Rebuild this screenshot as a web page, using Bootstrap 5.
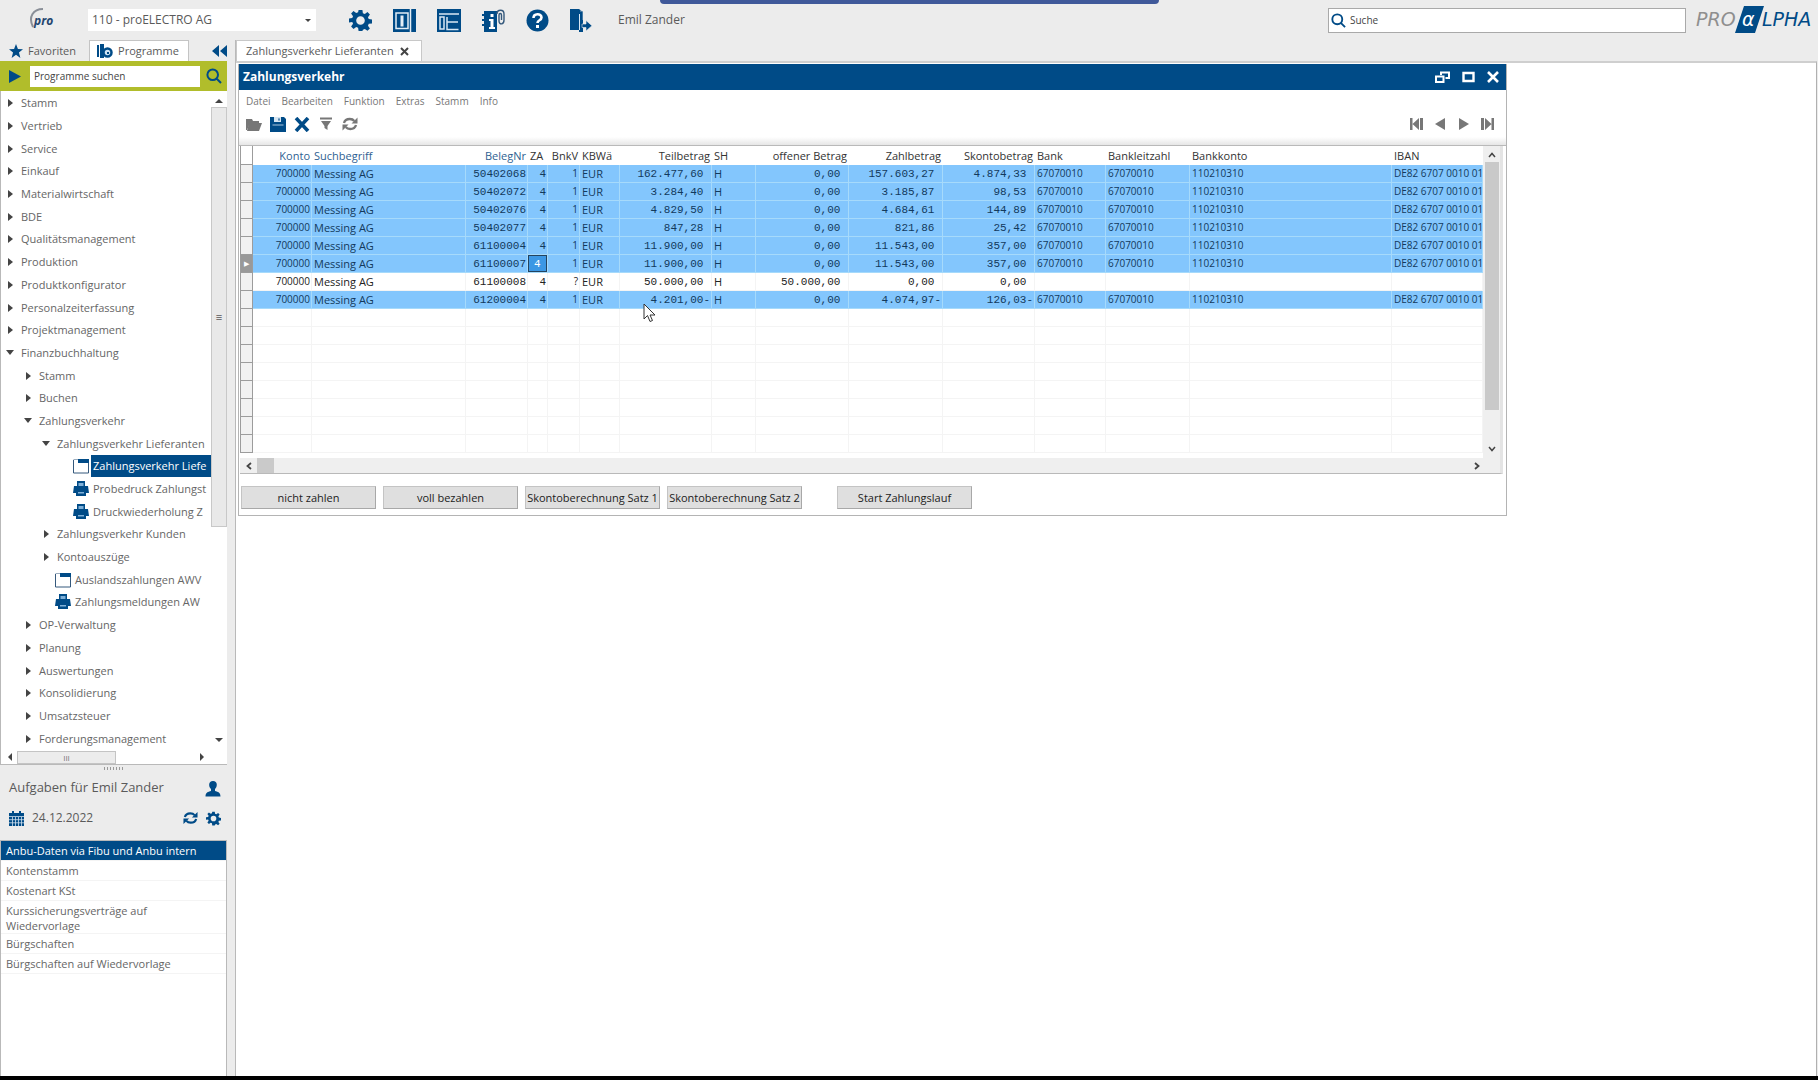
<!DOCTYPE html>
<html lang="de">
<head>
<meta charset="utf-8">
<meta name="viewport" content="width=device-width, initial-scale=1">
<title>Zahlungsverkehr Lieferanten</title>
<link href="https://cdn.jsdelivr.net/npm/bootstrap@5.3.0/dist/css/bootstrap.min.css" rel="stylesheet">
<style>
:root{--navy:#004b87;--chrome:#ececec;--ink:#5a5a5a;--edge:#b9b9b9}
body{font-family:"Open Sans","Noto Sans",sans-serif;font-size:11px;line-height:16px;color:var(--ink);background:var(--chrome);height:100vh;overflow:hidden}
button{border:0;background:none;padding:0;color:inherit}
a{color:inherit;text-decoration:none}
svg{display:block;flex:none}
.ico{color:var(--navy);fill:currentColor}
.fill-area{min-width:0;min-height:0}
/* top bar */
.topbar{height:40px;padding-left:29px}
.pro-logo{width:59px}
.mandant{width:228px;height:22px;border:0;border-radius:0;background-color:#fff;font-size:12px;color:var(--ink);padding:0 4px;appearance:none}
.mandant-wrap{position:relative}
.mandant-wrap::after{content:"";position:absolute;right:5px;top:10px;border:3px solid transparent;border-top-color:#444}
.toolset{gap:21px;margin-left:33px}
.user-name{font-size:12px;margin-left:26px}
.notch{position:absolute;top:0;left:660px;width:499px;height:4px;background:#40599a;border-radius:0 0 4px 4px}
.searchbox{width:358px;height:25px;background:#fff;border:1px solid #a9a9a9;margin-right:9px;padding-left:2px}
.searchbox input,.progsearch input{border:0;outline:0;background:#fff;color:#333;min-width:0;padding:0 4px;font-size:10px}
input::placeholder{color:#444;opacity:1}
.brand-type{font-family:"DejaVu Sans",sans-serif;font-style:italic;font-size:19px}
/* sidebar */
.side{width:236px;padding-right:8px;border-right:1px solid var(--edge)}
.side-tabs{height:21px}
.side-tab{height:21px;gap:5px;padding:0 9px}
.side-tab.on{background:#fff;border:1px solid #c4c4c4;border-bottom:0;width:100px;padding:0 7px;margin-left:4px}
.progsearch{background:#b1bd2b;height:30px;padding:0 5px 0 9px}
.progsearch input{width:170px;height:21px;margin-left:9px;margin-right:6px}
.tree-area{border-left:1px solid var(--edge);min-height:0}
.tree{margin:0;padding:1px 0 0;list-style:none;min-width:0}
.tree li{flex:1 1 0;min-height:0;white-space:nowrap}
.tree li>a,.tree li>button{display:flex;align-items:center;height:100%;color:#666}
.lv0{padding-left:7px}.lv1{padding-left:25px}.lv2{padding-left:43px}.lv3{padding-left:61px}
.twist{width:13px;display:block}
.twist::before{content:"";display:block;width:0;border:4px solid transparent;border-left:5px solid #444;border-right:0}
.twist.open::before{border:4px solid transparent;border-top:5px solid #444;border-bottom:0;margin-left:-2px}
.leaf{padding-left:11px}
.leaf-name{margin-left:2px;padding:2px 0 3px 2px;line-height:17px}
.leaf-name.on{background:var(--navy);color:#fff;width:120px}
.vbar{width:16px}
.vthumb{background:#e9e9e9;border:1px solid #c8c8c8;height:420px;width:16px}
.hbar{height:15px;background:#fff;border-left:1px solid var(--edge);border-bottom:1px solid var(--edge);padding:0 23px 0 7px}
.hthumb{width:99px;height:13px;background:#ececec;border:1px solid #c4c4c4;margin-left:5px;color:#777;font-size:8px;line-height:11px}
.tri-u,.tri-d,.tri-l,.tri-r{width:0;height:0;border:4px solid transparent}
.tri-u{border-bottom-color:#444;border-top:0}.tri-d{border-top-color:#444;border-bottom:0}
.tri-l{border-right-color:#444;border-left:0}.tri-r{border-left-color:#444;border-right:0}
.grip{height:8px;width:20px;padding-top:2px}
.grip::before{content:"";display:block;height:3px;background:repeating-linear-gradient(90deg,#999 0 1px,transparent 1px 3px)}
.tasks{height:303px}
.tasks-head{height:67px;padding:0 6px 0 9px}
.tasks-title{font-size:13px}
.tasks-date{font-size:12px}
.date-row{margin-top:13px}
.tasklist{border:1px solid var(--edge);border-bottom:0;border-radius:0;background:#fff}
.tasklist .list-group-item{border:0;border-bottom:1px solid #f4f4f4;padding:2px 4px 2px 5px;line-height:15px;color:#666;background:none;border-radius:0;width:100%}
.tasklist .list-group-item.active{background:var(--navy);color:#fff}
.tasklist .wrap-item{padding-bottom:0}
.wrap-item>span{display:block;width:150px}
/* workspace */
.doc-tabs{height:21px}
.doc-tab{height:21px;background:#fff;border:1px solid #c8c8c8;border-bottom:0;padding:0 12px 0 9px;width:186px}
.canvas{background:#fff;border-top:2px solid #cfcfcf;border-right:1px solid #b0b0b0;margin-right:1px;padding-top:1px;padding-left:2px;min-height:0}
.mdi{width:1269px;max-width:100%;border:1px solid #b4b4b4;border-top:0;background:#fff}
.mdi-title{height:26px;background:var(--navy);color:#fff;font-weight:700;font-size:12px;padding:0 7px 0 4px}
.win-ctl{gap:12px}
.menubar{gap:11px;padding:1px 7px 0;height:21px;font-size:10px}
.menubar button{color:#777;line-height:18px}
.toolrow{height:26px;padding:0 12px 0 7px}
.toolrow .tools{gap:8px}
.toolrow .tools,.toolrow .nav-icons{color:#777}
.nav-icons{gap:10px}
.shade{height:9px;background:linear-gradient(#fff,#e6e6e6);border-bottom:1px solid var(--edge)}
.gridbox{margin:0 3px 0 1px;border-right:3px solid #e4e4e4;border-bottom:1px solid var(--edge)}
.table-pane{flex:1 1 0;min-width:0;overflow:hidden;padding-bottom:5px}
.data{table-layout:fixed;margin:0;border-collapse:separate;border-spacing:0;width:100%;color:#222}
.data th,.data td{height:18px;padding:0 1px 0 2px;border:0 solid #f4f4f4;border-width:0 1px 1px 0;line-height:17px;white-space:nowrap;overflow:hidden;font-weight:400;box-shadow:none;background:#fff;color:inherit}
.data thead th{height:19px;border-color:#fff;color:#333}
.data thead th.key{color:#2f5f92}
.data .num{text-align:right}
.data td.mono{font-family:"Liberation Mono",monospace;text-align:right;padding-top:2px;line-height:15px}
.data td.digits{font-size:10px}
.data tr.paid td{background:#83c6fd;border-color:#a6dafb;color:#12395c}
.data tr>.mark-cell{background:#f1f1f1!important;border-color:#9c9c9c!important;border-left:1px solid #c8c8c8;padding:0}
.data thead tr>.mark-cell{background:#fff!important}
.data tr.current>.mark-cell{background:#999!important;color:#fff!important;font-size:7px;text-align:center}
.data tr.current>.mark-cell::before{content:"▶"}
.data td.edit{padding:0}
.data td.edit input{display:block;width:100%;height:17px;border:1px solid #23435f;background:#3c97e4;color:#fff;font:11px/15px "Liberation Mono",monospace;padding:0 5px;text-align:left}
.gv{width:17px;background:#efefef;padding:6px 0}
.gv-thumb{background:#c9c9c9;width:14px;margin-bottom:36px}
.gh{height:15px;background:#efefef;padding:0 20px 0 6px}
.gh-thumb{width:17px;height:15px;background:#cacaca;margin-left:5px}
.actions{gap:7px;padding:12px 2px 6px 2px}
.actions .btn{width:135px;height:23px;padding:0;border:1px solid #c4c4c4;border-right-color:#a8a8a8;border-bottom-color:#a8a8a8;border-radius:0;background:#dfdfdf;color:#222;font-size:11px;line-height:20px;white-space:nowrap}
.pointer{position:absolute;left:643px;top:303px}
.footline{height:4px;background:#000}
</style>
</head>
<body class="d-flex flex-column position-relative">
<svg width="0" height="0" class="position-absolute">
  <symbol id="gear" viewBox="0 0 24 24"><path fill-rule="evenodd" d="M10 1h4l.5 3.400 2 .8 2.800-2 2.500 2.500-2 2.800.8 2 3.400.5v4l-3.400.5-.8 2 2 2.800-2.500 2.500-2.800-2-2 .8L14 23h-4l-.5-3.400-2-.8-2.800 2-2.500-2.500 2-2.800-.8-2L0 14v-4l3.400-.5.8-2-2-2.800L4.700 2.200l2.800 2 2-.8zM12 7.500a4.500 4.500 0 1 0 0 9 4.500 4.500 0 0 0 0-9z"/></symbol>
  <symbol id="lens" viewBox="0 0 16 16"><path d="M11 11l4 4M12 6.700a5.300 5.300 0 1 1-10.600 0 5.300 5.300 0 0 1 10.600 0z" fill="none" stroke="currentColor" stroke-width="2"/></symbol>
  <symbol id="sync" viewBox="0 0 16 14"><path d="M2 6c.6-2.400 3-4 5.800-4 2 0 3.500.7 4.500 2M14 8c-.6 2.400-3 4-5.800 4-2 0-3.500-.7-4.500-2" fill="none" stroke="currentColor" stroke-width="2.300"/><path d="M15.500.5V6.500H9.500zM.5 13.500v-6h6z"/></symbol>
  <symbol id="winicon" viewBox="0 0 16 16"><path d="M.5 2h15v13H.5z" fill="#fff" stroke="#35597c"/><path d="M5 1h11v4H5z"/><path d="M1 2h4v3H1z" fill="#fff"/></symbol>
  <symbol id="printer" viewBox="0 0 16 16"><path d="M4 0h8v5H4zM1 5h14l1 7h-3v3H3v-3H0z"/><path d="M5.500 2h5v3h-5zM5 11h6v1.500H5z" fill="#7fb0d8"/></symbol>
</svg>

<header class="topbar d-flex align-items-center flex-shrink-0">
  <div class="pro-logo"><svg width="30" height="26" viewBox="0 0 30 26"><path d="M4 20C-1 10 4 2 14 2" fill="none" stroke="#8a8f98" stroke-width="2"/><text x="5" y="18" font-size="12" font-weight="700" font-style="italic" fill="#24456f">pro</text></svg></div>
  <div class="mandant-wrap"><select class="mandant" aria-label="Mandant"><option>110 - proELECTRO AG</option></select></div>
  <div class="toolset d-flex align-items-center">
    <button aria-label="Einstellungen"><svg class="ico" width="23" height="23"><use href="#gear"/></svg></button>
    <button aria-label="Spalten"><svg class="ico" width="23" height="23" viewBox="0 0 23 23"><path d="M0 0h23v23H0z"/><path d="M3 4h12v15.500H3zM17.500 0v23" fill="none" stroke="#e4eef6" stroke-width="1.500"/><path d="M7.500 6.500h3v11h-3z" fill="#e4eef6"/></svg></button>
    <button aria-label="Layout"><svg class="ico" width="24" height="23" viewBox="0 0 24 23"><path d="M0 0h24v23H0z"/><path d="M2 5h20M3 8v12h4V8zM10 8v12.500h11.500M10 13h11" fill="none" stroke="#d8e7f3" stroke-width="1.500"/></svg></button>
    <button aria-label="Informationen"><svg class="ico" width="23" height="23" viewBox="0 0 23 23"><path d="M2 2h13v21H2z"/><path d="M0 5h3v2H0zM0 10h3v2H0zM0 15h3v2H0z"/><path d="M8.500 5h3v3h-3zM7 10h4.500v8H13v2H7v-2h1.500v-6H7z" fill="#fff"/><path d="M15 5c0-5 7-5 7 0v6c0 5-5 5-5 1V6c0-2 2.500-2 2.500 0v5" fill="#ececec" stroke="#35597c" stroke-width="1.400"/></svg></button>
    <button aria-label="Hilfe"><svg class="ico" width="23" height="23" viewBox="0 0 23 23"><circle cx="11.500" cy="11.500" r="11"/><path d="M7.500 9c0-5 8-5 8-.5 0 3-4 2.500-4 5.500" fill="none" stroke="#fff" stroke-width="2.600"/><path d="M10 16h3v3h-3z" fill="#fff"/></svg></button>
    <button aria-label="Abmelden"><svg class="ico" width="22" height="23" viewBox="0 0 22 23"><path d="M0 0h9l4 3v20H9v-2H0z"/><path d="M9.500 5v16" stroke="#d8e7f3"/><path d="M10 2h3v9M12 15h4v-3.500l6 5.200-6 5.300v-3.500h-4z" stroke="#ececec" stroke-width=".6"/></svg></button>
  </div>
  <span class="user-name">Emil Zander</span>
  <label class="searchbox d-flex align-items-center ms-auto"><svg class="ico" width="15" height="15"><use href="#lens"/></svg><input class="flex-grow-1" type="search" placeholder="Suche" aria-label="Suche"></label>
  <svg class="brand-type" width="123" height="30" viewBox="0 0 123 30"><path d="M49 1h20l-9 27H40z" fill="#004b87"/><text x="1" y="21" fill="#8f8f8f">PRO</text><text x="67" y="21" fill="#004b87">LPHA</text><text x="47" y="21" fill="#fff">α</text></svg>
</header>
<div class="notch"></div>

<div class="d-flex flex-grow-1 fill-area">
  <aside class="side d-flex flex-column flex-shrink-0">
    <div class="side-tabs d-flex align-items-center flex-shrink-0">
      <button class="side-tab d-flex align-items-center"><svg class="ico" width="14" height="14" viewBox="0 0 16 16"><path d="M8 0l2.200 5.600 5.800.3-4.600 3.700L13 16l-5-3.600L3 16l1.600-6.400L0 5.900l5.800-.3z"/></svg>Favoriten</button>
      <button class="side-tab on d-flex align-items-center"><svg class="ico" width="16" height="14" viewBox="0 0 16 14"><path d="M0 1h2v12H0zM3 0h4v14H3z"/><circle cx="10.500" cy="8.500" r="4" fill="#cfe3f3" stroke="#004b87" stroke-width="2.500"/><path d="M10 8h2v2h-2z"/></svg>Programme</button>
      <button class="ms-auto" aria-label="Einklappen"><svg class="ico" width="15" height="12" viewBox="0 0 15 12"><path d="M7 0v12L0 6zM15 0v12L8 6z"/></svg></button>
    </div>
    <div class="progsearch d-flex align-items-center flex-shrink-0">
      <button aria-label="Start"><svg class="ico" width="12" height="13" viewBox="0 0 12 13"><path d="M0 0l12 6.500L0 13z"/></svg></button>
      <input type="search" placeholder="Programme suchen" aria-label="Programme suchen">
      <button aria-label="Suchen"><svg class="ico" width="16" height="16"><use href="#lens"/></svg></button>
    </div>
    <div class="tree-area d-flex flex-grow-1 bg-white">
      <ul class="tree d-flex flex-column flex-grow-1 overflow-hidden" id="tree"></ul>
      <div class="vbar d-flex flex-column align-items-center py-2">
        <div class="tri-u mb-1"></div>
        <div class="vthumb d-flex align-items-center justify-content-center">≡</div>
        <div class="tri-d mt-auto"></div>
      </div>
    </div>
    <div class="hbar d-flex align-items-center flex-shrink-0"><div class="tri-l"></div><div class="hthumb text-center">III</div><div class="tri-r ms-auto"></div></div>
    <div class="grip mx-auto flex-shrink-0"></div>
    <section class="tasks d-flex flex-column flex-shrink-0">
      <div class="tasks-head d-flex flex-column">
        <div class="d-flex align-items-center justify-content-between"><span class="tasks-title pt-1">Aufgaben für Emil Zander</span><svg class="ico mt-2" width="16" height="16" viewBox="0 0 16 16"><path d="M8 0c5 0 4.500 6 2 8v2c3 .8 5.500 1.500 5.500 5.500H.5c0-4 2.500-4.700 5.500-5.500V8C3.500 6 3 0 8 0z"/></svg></div>
        <div class="date-row d-flex align-items-center gap-2">
          <svg class="ico" width="15" height="15" viewBox="0 0 15 15"><path d="M0 2h15v13H0zM3 0h2v2H3zM10 0h2v2h-2z"/><path d="M0 5.500h15M0 8.700h15M0 11.800h15M3.500 6v9M6.500 6v9M9.500 6v9M12.500 6v9" stroke="#cfe0ee" stroke-width=".8"/></svg>
          <span class="tasks-date">24.12.2022</span>
          <button class="ms-auto" aria-label="Aktualisieren"><svg class="ico" width="15" height="14"><use href="#sync"/></svg></button>
          <button aria-label="Einstellungen"><svg class="ico" width="15" height="15"><use href="#gear"/></svg></button>
        </div>
      </div>
      <div class="tasklist list-group flex-grow-1">
        <a href="#" class="list-group-item active">Anbu-Daten via Fibu und Anbu intern</a>
        <a href="#" class="list-group-item">Kontenstamm</a>
        <a href="#" class="list-group-item">Kostenart KSt</a>
        <a href="#" class="list-group-item wrap-item"><span>Kurssicherungsverträge auf Wiedervorlage</span></a>
        <a href="#" class="list-group-item">Bürgschaften</a>
        <a href="#" class="list-group-item">Bürgschaften auf Wiedervorlage</a>
      </div>
    </section>
  </aside>

  <main class="d-flex flex-column flex-grow-1 fill-area">
    <div class="doc-tabs flex-shrink-0"><div class="doc-tab d-flex align-items-center justify-content-between"><span>Zahlungsverkehr Lieferanten</span><button aria-label="Schließen"><svg width="9" height="9" viewBox="0 0 9 9"><path d="M1 1l7 7M8 1L1 8" stroke="#444" stroke-width="2"/></svg></button></div></div>
    <div class="canvas flex-grow-1">
      <section class="mdi">
        <div class="mdi-title d-flex align-items-center"><span>Zahlungsverkehr</span>
          <div class="win-ctl ms-auto d-flex align-items-center">
            <button aria-label="Verkleinern"><svg width="15" height="12" viewBox="0 0 15 12"><path d="M1 5.500h7.500V11H1zM6 4V1.500h8V7h-3.500" fill="none" stroke="#fff" stroke-width="2"/></svg></button>
            <button aria-label="Maximieren"><svg width="13" height="12" viewBox="0 0 13 12"><path d="M1.500 2h10v8h-10z" fill="none" stroke="#fff" stroke-width="2.400"/></svg></button>
            <button aria-label="Fenster schließen"><svg width="12" height="12" viewBox="0 0 12 12"><path d="M1 1l10 10M11 1L1 11" stroke="#fff" stroke-width="2.600"/></svg></button>
          </div>
        </div>
        <nav class="menubar d-flex"><button>Datei</button><button>Bearbeiten</button><button>Funktion</button><button>Extras</button><button>Stamm</button><button>Info</button></nav>
        <div class="toolrow d-flex align-items-center justify-content-between">
          <div class="tools d-flex align-items-center">
            <button aria-label="Öffnen"><svg width="16" height="13" viewBox="0 0 16 13" fill="#777"><path d="M0 1h6l1 2h6v2H4L1 12H0z"/><path d="M3 5h13l-3 8H1z"/></svg></button>
            <button aria-label="Speichern"><svg class="ico" width="16" height="15" viewBox="0 0 16 15"><path d="M0 0h14l2 2v13H0z"/><path d="M4 0h7v5H4z" fill="#d7e6f2"/><path d="M8 1h2v3H8zM2.500 8h11" stroke="#d7e6f2" stroke-width=".8"/></svg></button>
            <button aria-label="Löschen"><svg class="ico" width="16" height="15" viewBox="0 0 16 15"><path d="M2 1l12 13M14 1L2 14" stroke="#004b87" stroke-width="3.600"/></svg></button>
            <button aria-label="Filter"><svg width="16" height="14" viewBox="0 0 16 14"><path d="M2 1.500h12" stroke="#777" stroke-width="2"/><path d="M3 4h10l-3.500 5v4L6.500 11V9z" fill="#777"/></svg></button>
            <button aria-label="Neu laden"><svg width="16" height="14" fill="#777"><use href="#sync"/></svg></button>
          </div>
          <div class="nav-icons d-flex align-items-center">
            <button aria-label="Erster"><svg width="14" height="12" viewBox="0 0 14 12" fill="#777"><path d="M0 0h2.500v12H0zM9 0v12L2.500 6zM10 0h3v12h-3z"/></svg></button>
            <button aria-label="Zurück"><svg width="13" height="12" viewBox="0 0 13 12" fill="#777"><path d="M11 0v12L1 6z"/></svg></button>
            <button aria-label="Weiter"><svg width="13" height="12" viewBox="0 0 13 12" fill="#777"><path d="M2 0v12l10-6z"/></svg></button>
            <button aria-label="Letzter"><svg width="14" height="12" viewBox="0 0 14 12" fill="#777"><path d="M11.500 0H14v12h-2.500zM5 0v12l6.500-6zM1 0h3v12H1z"/></svg></button>
          </div>
        </div>
        <div class="shade"></div>
        <div class="gridbox">
          <div class="d-flex">
            <div class="table-pane">
              <table class="data">
                <colgroup id="cols"></colgroup>
                <thead><tr id="heads"></tr></thead>
                <tbody id="rows"></tbody>
              </table>
            </div>
            <div class="gv d-flex flex-column flex-shrink-0 align-items-center justify-content-between">
              <svg width="8" height="6" viewBox="0 0 8 6"><path d="M1 5l3-3.500L7 5" fill="none" stroke="#444" stroke-width="1.500"/></svg>
              <div class="gv-thumb flex-grow-1 mt-1"></div>
              <svg width="8" height="6" viewBox="0 0 8 6"><path d="M1 1l3 3.500L7 1" fill="none" stroke="#444" stroke-width="1.500"/></svg>
            </div>
          </div>
          <div class="gh d-flex align-items-center">
            <svg width="6" height="8" viewBox="0 0 6 8"><path d="M5 1L1.500 4 5 7" fill="none" stroke="#444" stroke-width="1.800"/></svg><div class="gh-thumb"></div>
            <svg class="ms-auto" width="6" height="8" viewBox="0 0 6 8"><path d="M1 1l3.500 3L1 7" fill="none" stroke="#444" stroke-width="1.800"/></svg>
          </div>
        </div>
        <div class="actions d-flex">
          <button class="btn">nicht zahlen</button><button class="btn">voll bezahlen</button><button class="btn">Skontoberechnung Satz 1</button><button class="btn me-4">Skontoberechnung Satz 2</button><button class="btn ms-1">Start Zahlungslauf</button>
        </div>
      </section>
    </div>
  </main>
</div>
<div class="footline flex-shrink-0"></div>
<svg class="pointer" width="14" height="20" viewBox="0 0 14 20"><path d="M1 1v15l3.500-3.500L7 18.500l2.500-1-2.500-5.500h5z" fill="#fff" stroke="#333"/></svg>

<script>
// kind: > closed folder, v open folder, w window program, p print program
const tree = [[0,'>','Stamm'],[0,'>','Vertrieb'],[0,'>','Service'],[0,'>','Einkauf'],[0,'>','Materialwirtschaft'],[0,'>','BDE'],[0,'>','Qualitätsmanagement'],[0,'>','Produktion'],[0,'>','Produktkonfigurator'],[0,'>','Personalzeiterfassung'],[0,'>','Projektmanagement'],[0,'v','Finanzbuchhaltung'],[1,'>','Stamm'],[1,'>','Buchen'],[1,'v','Zahlungsverkehr'],[2,'v','Zahlungsverkehr Lieferanten'],[3,'w','Zahlungsverkehr Liefe',1],[3,'p','Probedruck Zahlungst'],[3,'p','Druckwiederholung Z'],[2,'>','Zahlungsverkehr Kunden'],[2,'>','Kontoauszüge'],[2,'w','Auslandszahlungen AWV'],[2,'p','Zahlungsmeldungen AW'],[1,'>','OP-Verwaltung'],[1,'>','Planung'],[1,'>','Auswertungen'],[1,'>','Konsolidierung'],[1,'>','Umsatzsteuer'],[1,'>','Forderungsmanagement']];
document.getElementById('tree').innerHTML = tree.map(([lv,k,t,on]) => {
  const folder = k === '>' || k === 'v';
  return `<li class="lv${lv}">` + (folder
    ? `<button><span class="twist ${k === 'v' ? 'open' : ''}"></span>${t}</button>`
    : `<a href="#" class="leaf"><svg class="ico" width="16" height="16"><use href="#${k === 'w' ? 'winicon' : 'printer'}"/></svg><span class="leaf-name ${on ? 'on' : ''}">${t}</span></a>`) + '</li>';
}).join('');

const cols = [['',13,'mark-cell'],['Konto',59,'num key','num digits'],['Suchbegriff',154,'key',''],['BelegNr',62,'num key','mono'],['ZA',20,'','mono'],['BnkV',32,'num','num digits'],['KBWä',40,'',''],['Teilbetrag',92,'num','mono'],['SH',44,'',''],['offener Betrag',93,'num','mono'],['Zahlbetrag',94,'num','mono'],['Skontobetrag',92,'num','mono'],['Bank',71,'','digits'],['Bankleitzahl',84,'','digits'],['Bankkonto',202,'','digits'],['IBAN',0,'','digits']];
const iban = ['67070010','67070010','110210310','DE82 6707 0010 01'], none = ['','','',''];
const rows = [
 ['50402068','1','162.477,60 ','0,00 ','157.603,27 ','4.874,33 '],
 ['50402072','1','3.284,40 ','0,00 ','3.185,87 ','98,53 '],
 ['50402076','1','4.829,50 ','0,00 ','4.684,61 ','144,89 '],
 ['50402077','1','847,28 ','0,00 ','821,86 ','25,42 '],
 ['61100004','1','11.900,00 ','0,00 ','11.543,00 ','357,00 '],
 ['61100007','1','11.900,00 ','0,00 ','11.543,00 ','357,00 '],
 ['61100008','?','50.000,00 ','50.000,00 ','0,00 ','0,00 '],
 ['61200004','1','4.201,00-','0,00 ','4.074,97-','126,03-']];
document.getElementById('cols').innerHTML = cols.map(c => c[1] ? `<col style="width:${c[1]}px">` : '<col>').join('');
document.getElementById('heads').innerHTML = cols.map(c => `<th scope="col" class="${c[2]}">${c[0]}</th>`).join('');
const line = (cells, cls, edit) => `<tr class="${cls}"><td class="mark-cell"></td>` + cells.map((v,i) =>
  edit && i === 3 ? '<td class="edit"><input aria-label="ZA" value="4"></td>' : `<td class="${cols[i+1][3]}">${v.replace(/ $/,'&nbsp;')}</td>`).join('') + '</tr>';
let html = rows.map((r,n) => {
  const paid = r[1] !== '?';
  return line(['700000','Messing AG',r[0],'4',r[1],'EUR',r[2],'H',r[3],r[4],r[5],...(paid ? iban : none)], (paid ? 'paid' : '') + (n === 5 ? ' current' : ''), n === 5);
}).join('');
for (let i = 0; i < 8; i++) html += line(Array(15).fill(''), '');
document.getElementById('rows').innerHTML = html;
</script>
<script src="https://cdn.jsdelivr.net/npm/bootstrap@5.3.0/dist/js/bootstrap.bundle.min.js"></script>
</body>
</html>
